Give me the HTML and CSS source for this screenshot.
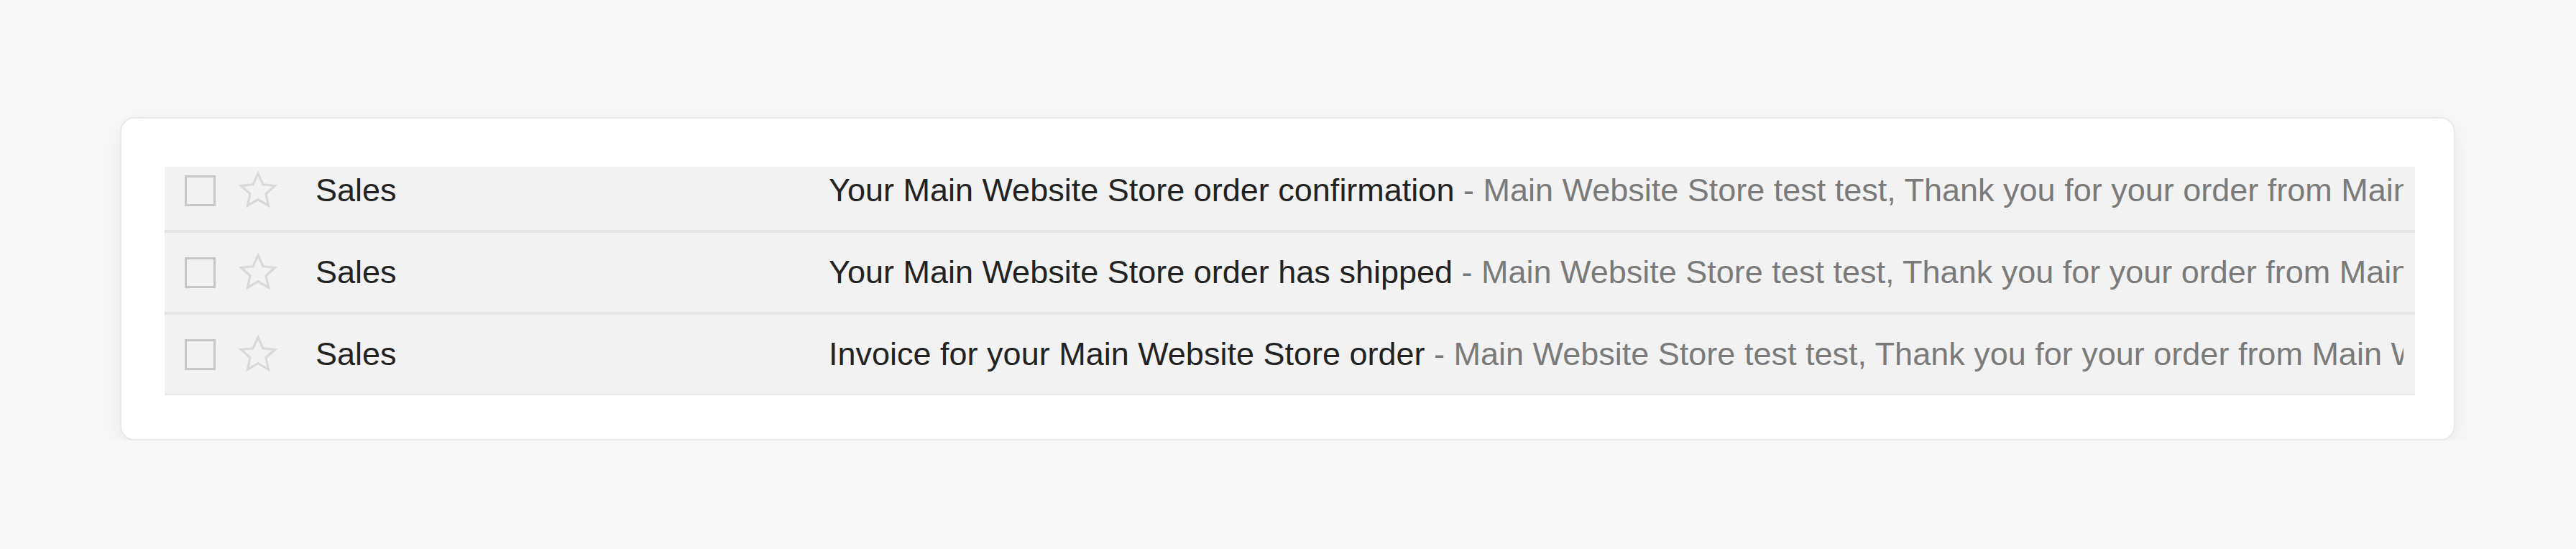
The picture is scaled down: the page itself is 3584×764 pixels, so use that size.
FILE: index.html
```html
<!DOCTYPE html>
<html lang="en">
<head>
    <meta charset="UTF-8">
    <meta name="viewport" content="width=device-width, initial-scale=1.0">
    <title>Inbox</title>
    <link rel="stylesheet" href="styles.css">
</head>
<body>
    <div class="card">
        <!-- mail list, scrolled a little so the first row is cut -->
        <div class="mail-list">
            <div class="mail-rows">
                <div class="mail-row">
                    <span class="check"></span>
                    <svg class="star" viewBox="0 0 24 24"><path d="M12 2.6l2.8 6.1 6.6.7-5 4.5 1.4 6.5L12 17.1l-5.8 3.3 1.4-6.5-5-4.5 6.6-.7z"/></svg>
                    <span class="sender">Sales</span>
                    <span class="subject">Your Main Website Store order confirmation<span class="snippet"> - Main Website Store test test, Thank you for your order from Main Website Store. Once your package ships we will send you a tracking number.</span></span>
                </div>
                <div class="mail-row">
                    <span class="check"></span>
                    <svg class="star" viewBox="0 0 24 24"><path d="M12 2.6l2.8 6.1 6.6.7-5 4.5 1.4 6.5L12 17.1l-5.8 3.3 1.4-6.5-5-4.5 6.6-.7z"/></svg>
                    <span class="sender">Sales</span>
                    <span class="subject">Your Main Website Store order has shipped<span class="snippet"> - Main Website Store test test, Thank you for your order from Main Website Store. Your shipping confirmation is below.</span></span>
                </div>
                <div class="mail-row">
                    <span class="check"></span>
                    <svg class="star" viewBox="0 0 24 24"><path d="M12 2.6l2.8 6.1 6.6.7-5 4.5 1.4 6.5L12 17.1l-5.8 3.3 1.4-6.5-5-4.5 6.6-.7z"/></svg>
                    <span class="sender">Sales</span>
                    <span class="subject">Invoice for your Main Website Store order<span class="snippet"> - Main Website Store test test, Thank you for your order from Main Website Store. Your invoice is below.</span></span>
                </div>
            </div>
        </div>
    </div>
</body>
</html>
```

FILE: styles.css
```css
body {
    margin: 0;
    padding: 163px 168px 0 167px;
    background-color: #f7f7f7;
    font-family: "Liberation Sans", Arial, sans-serif;
    color: #222;
}
.card {
    background: #fff;
    border: 2px solid #e9e9e9;
    border-radius: 20px;
    padding: 67px 54px 61px 60px;
    box-shadow: 0 10px 32px rgba(0, 0, 0, 0.06);
}
.mail-list {
    height: 318px;
    overflow: hidden;
}
.mail-rows {
    margin-top: -22px;
}
.mail-row {
    display: flex;
    align-items: center;
    height: 110px;
    padding: 0 16px 0 28px;
    background: #f2f2f2;
    border-bottom: 4px solid #e5e5e5;
    font-size: 45px;
    white-space: nowrap;
}
.mail-row:last-child {
    border-bottom-width: 3px;
}
.check {
    flex: none;
    width: 37px;
    height: 37px;
    border: 3px solid #c6c6c6;
}
.star {
    flex: none;
    width: 60px;
    height: 60px;
    margin-left: 29px;
    fill: none;
    stroke: #d9d9d9;
    stroke-width: 1.3;
    stroke-linejoin: miter;
}
.sender {
    flex: none;
    width: 714px;
    margin-left: 50px;
}
.subject {
    flex: 1;
    overflow: hidden;
}
.snippet {
    color: #7a7a7a;
}
```
